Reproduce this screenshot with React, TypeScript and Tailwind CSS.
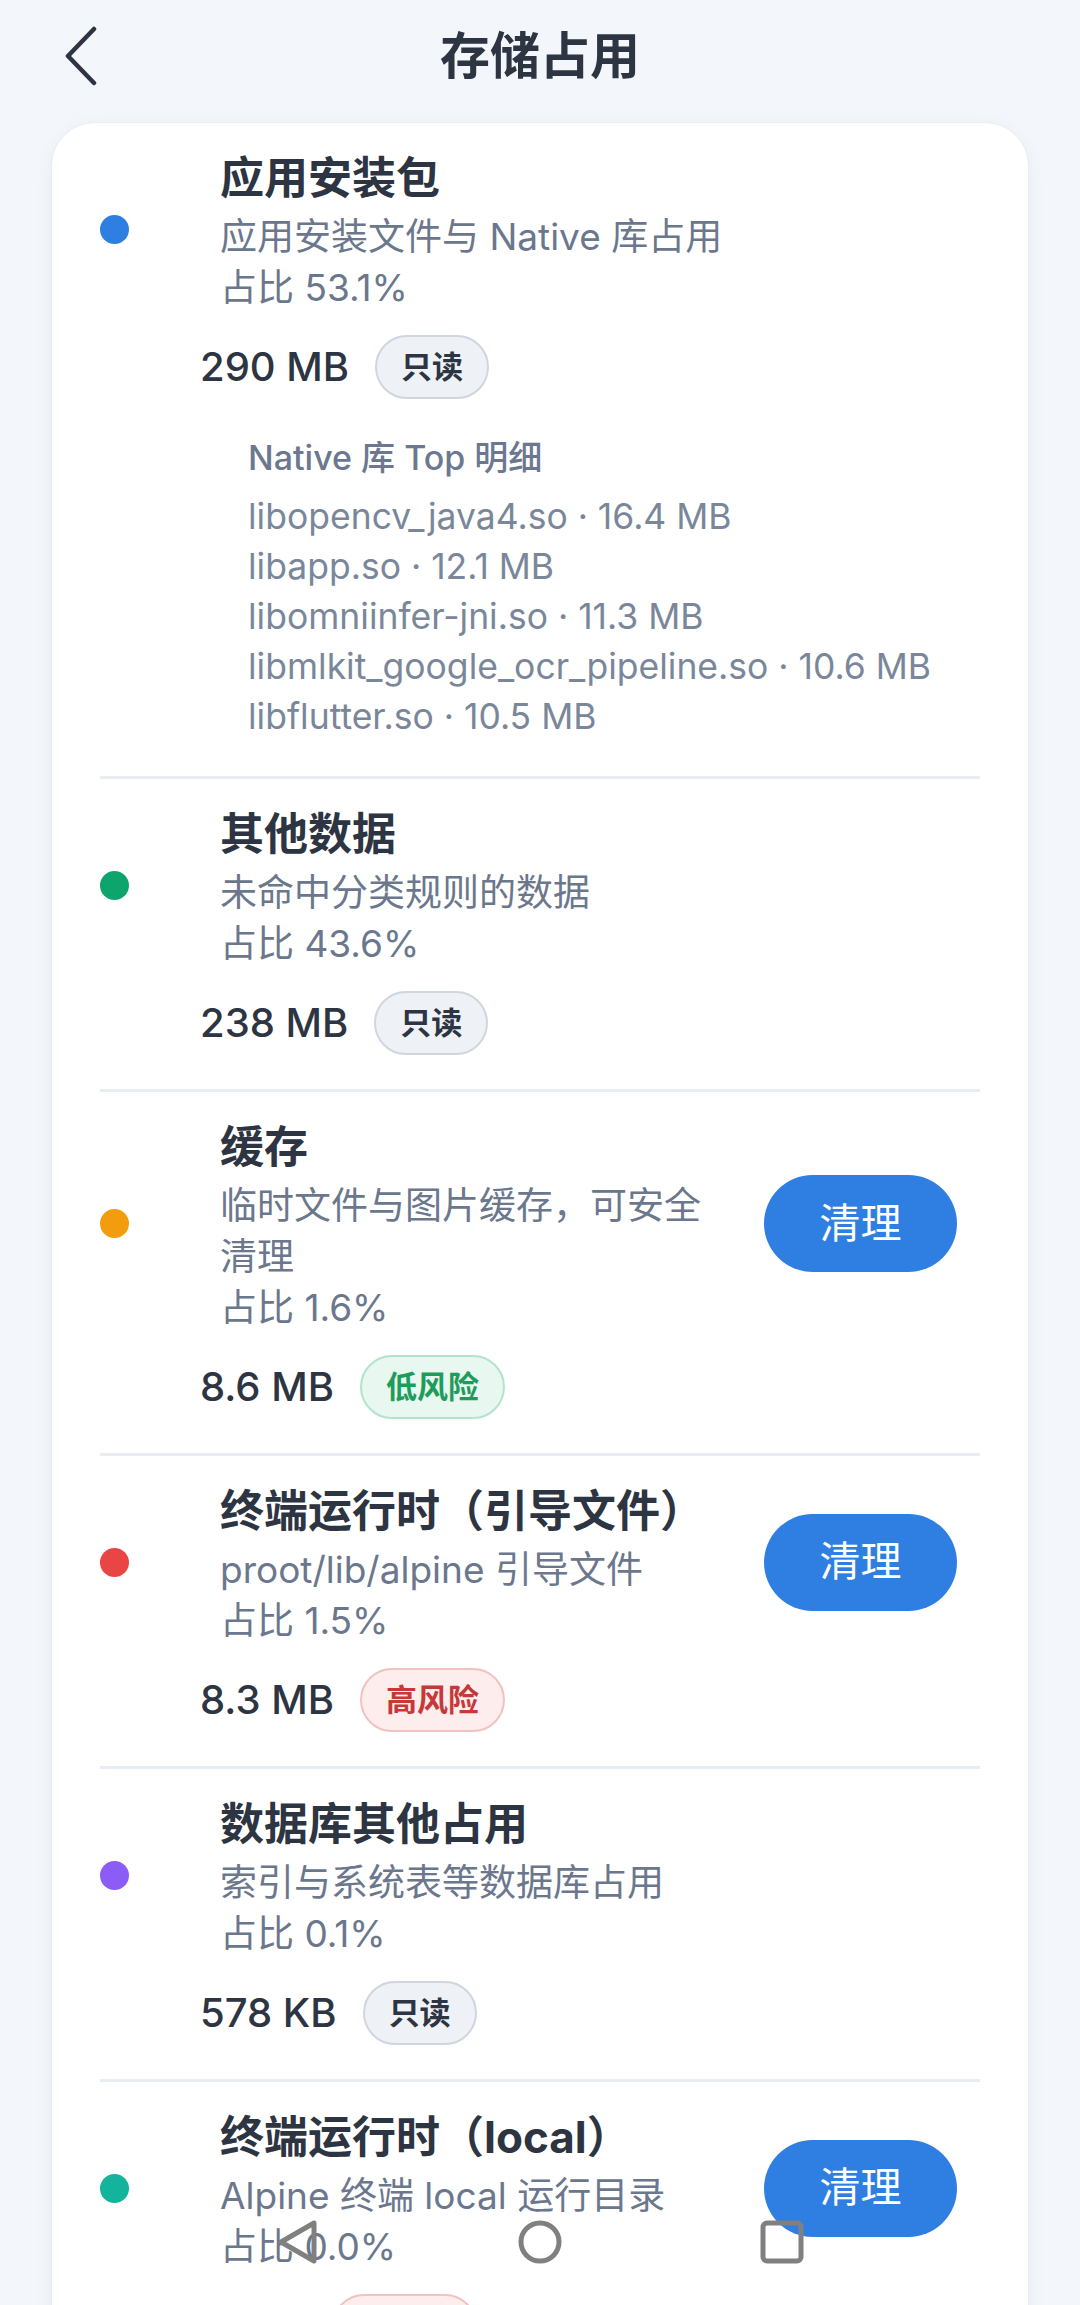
import React from "react";

type Tag = "ro" | "low" | "high";

interface Section {
  dot: string;
  title: string;
  desc: string;
  ratio: string;
  size: string;
  tag: Tag;
  clean?: boolean;
  details?: string[];
}

const sections: Section[] = [
  {
    dot: "bg-[#2f7fe2]",
    title: "应用安装包",
    desc: "应用安装文件与 Native 库占用",
    ratio: "占比 53.1%",
    size: "290 MB",
    tag: "ro",
    details: [
      "libopencv_java4.so · 16.4 MB",
      "libapp.so · 12.1 MB",
      "libomniinfer-jni.so · 11.3 MB",
      "libmlkit_google_ocr_pipeline.so · 10.6 MB",
      "libflutter.so · 10.5 MB",
    ],
  },
  {
    dot: "bg-[#0ea56c]",
    title: "其他数据",
    desc: "未命中分类规则的数据",
    ratio: "占比 43.6%",
    size: "238 MB",
    tag: "ro",
  },
  {
    dot: "bg-[#f29c0e]",
    title: "缓存",
    desc: "临时文件与图片缓存，可安全清理",
    ratio: "占比 1.6%",
    size: "8.6 MB",
    tag: "low",
    clean: true,
  },
  {
    dot: "bg-[#ea4545]",
    title: "终端运行时（引导文件）",
    desc: "proot/lib/alpine 引导文件",
    ratio: "占比 1.5%",
    size: "8.3 MB",
    tag: "high",
    clean: true,
  },
  {
    dot: "bg-[#8b5cf6]",
    title: "数据库其他占用",
    desc: "索引与系统表等数据库占用",
    ratio: "占比 0.1%",
    size: "578 KB",
    tag: "ro",
  },
  {
    dot: "bg-[#14b39b]",
    title: "终端运行时（local）",
    desc: "Alpine 终端 local 运行目录",
    ratio: "占比 0.0%",
    size: "12 KB",
    tag: "high",
    clean: true,
  },
];

function Badge({ tag }: { tag: Tag }) {
  if (tag === "low") {
    return (
      <span className="h-[64px] px-[24px] flex items-center rounded-full border-2 border-[#b3e3cb] bg-[#e8f7ef] text-[31px] font-semibold text-[#1e9c5c]">
        低风险
      </span>
    );
  }
  if (tag === "high") {
    return (
      <span className="h-[64px] px-[24px] flex items-center rounded-full border-2 border-[#f1c2c2] bg-[#fdeded] text-[31px] font-semibold text-[#c73838]">
        高风险
      </span>
    );
  }
  return (
    <span className="h-[64px] px-[24px] flex items-center rounded-full border-2 border-[#cfd6df] bg-[#eef2f7] text-[31px] font-semibold text-[#2d3442]">
      只读
    </span>
  );
}

function Row({ s, last }: { s: Section; last: boolean }) {
  return (
    <div>
      <div className="pt-[22px] pb-[34px]">
        <div className="flex items-center">
          <div className="w-[120px] shrink-0">
            <div className={`w-[29px] h-[29px] rounded-full ${s.dot}`} />
          </div>
          <div className="flex-1 min-w-0">
            <div className="text-[44px] leading-[66px] font-bold text-[#2d3442] whitespace-nowrap">
              {s.title}
            </div>
            <div className="text-[37px] leading-[51px] text-[#6b778c]">{s.desc}</div>
            <div className="text-[37px] leading-[51px] text-[#6b778c]">{s.ratio}</div>
          </div>
          {s.clean && (
            <button className="ml-[44px] mr-[23px] shrink-0 w-[193px] h-[97px] rounded-full bg-[#2f7fe2] text-white text-[41px]">
              清理
            </button>
          )}
        </div>
        <div className="mt-[22px] pl-[100px] flex items-center gap-[26px]">
          <span className="text-[40px] font-medium text-[#2d3442]">{s.size}</span>
          <Badge tag={s.tag} />
        </div>
        {s.details && (
          <div className="mt-[34px] pl-[148px]">
            <div className="text-[34px] leading-[50px] mb-[9px] font-medium text-[#6b7890]">
              Native 库 Top 明细
            </div>
            {s.details.map((d) => (
              <div key={d} className="text-[35.5px] leading-[50px] text-[#7a879a] whitespace-nowrap">
                {d}
              </div>
            ))}
          </div>
        )}
      </div>
      {!last && <div className="h-[3px] bg-[#e8edf3]" />}
    </div>
  );
}

export default function App() {
  return (
    <div className="relative h-[2305px] overflow-hidden bg-[#f3f6fa] font-[Inter,'Noto_Sans_CJK_SC',sans-serif]">
      <header className="h-[112px] grid grid-cols-[1fr_auto_1fr] items-center">
        <div className="pl-[64px]">
          <svg width="34" height="60" viewBox="0 0 34 60" fill="none">
            <path d="M30 3 L4 30 L30 57" stroke="#2d3442" strokeWidth="4.5" strokeLinecap="round" strokeLinejoin="round" />
          </svg>
        </div>
        <h1 className="text-[50px] font-bold text-[#2d3442]">存储占用</h1>
        <div />
      </header>

      <main className="mt-[10px] mx-[51px] rounded-[44px] bg-white border border-[#e9eef4] shadow-[0_4px_18px_rgba(30,50,90,0.05)] px-[48px]">
        {sections.map((s, i) => (
          <Row key={s.title} s={s} last={i === sections.length - 1} />
        ))}
      </main>

      {/* transparent system nav bar */}
      <div className="absolute left-0 right-0 top-[2218px] h-[48px] flex justify-center items-center gap-[196px]">
        <svg width="46" height="46" viewBox="0 0 46 46" fill="none">
          <path d="M39 4 L6 23 L39 42 Z" stroke="#808080" strokeWidth="5" strokeLinejoin="round" />
        </svg>
        <svg width="46" height="46" viewBox="0 0 46 46" fill="none">
          <circle cx="23" cy="23" r="19" stroke="#808080" strokeWidth="5" />
        </svg>
        <svg width="46" height="46" viewBox="0 0 46 46" fill="none">
          <rect x="4" y="4" width="38" height="38" rx="4" stroke="#808080" strokeWidth="5" />
        </svg>
      </div>
    </div>
  );
}
